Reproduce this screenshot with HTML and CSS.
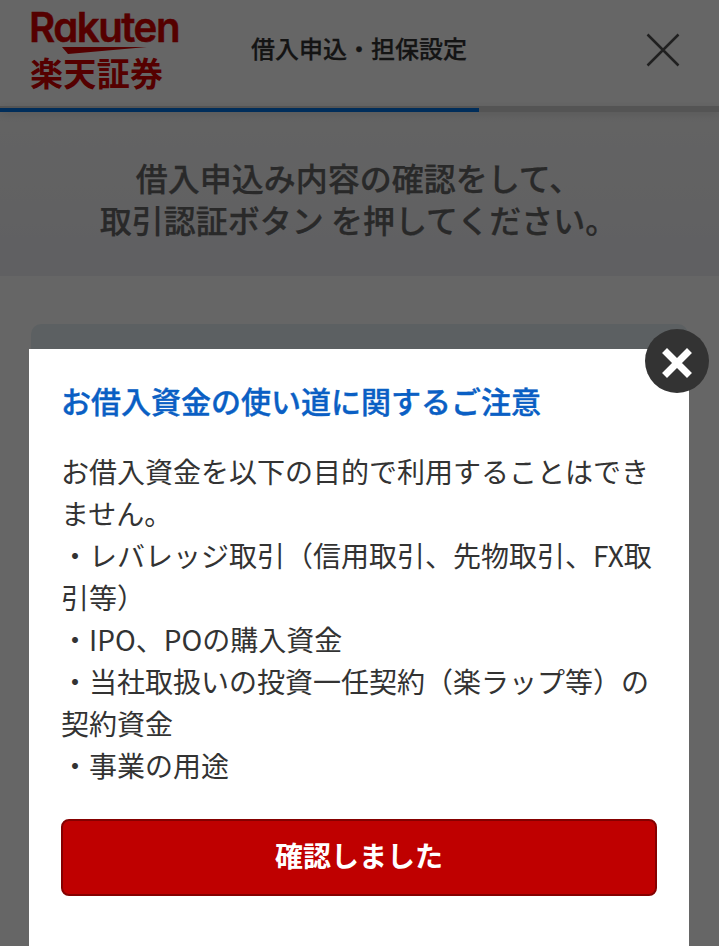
FILE: index.html
```html
<!DOCTYPE html>
<html lang="ja">
<head>
<meta charset="utf-8">
<title>借入申込・担保設定</title>
<link rel="stylesheet" href="styles.css">
</head>
<body>
<header class="header">
  <svg class="logo" width="160" height="92" viewBox="0 0 160 92" role="img" aria-label="Rakuten 楽天証券">
    <text class="logo-en" x="-2" y="42" textLength="150" lengthAdjust="spacingAndGlyphs">Rakuten</text>
    <path d="M31 47H116L37 54Z"/>
    <text class="logo-ja" x="-1" y="86" textLength="133">楽天証券</text>
  </svg>
  <h1 class="title">借入申込・担保設定</h1>
  <svg class="header-close" width="36" height="36" viewBox="0 0 36 36"><path d="M2.500 2.500L33.500 33.500M33.500 2.500L2.500 33.500"/></svg>
</header>
<div class="progress"><div class="progress-bar"></div></div>
<section class="lead">
  <p>借入申込み内容の確認をして、<br>取引認証ボタン を押してください。</p>
</section>
<main class="content"><div class="panel"></div></main>
<div class="overlay">
  <div class="modal">
    <button class="modal-close" aria-label="閉じる">
      <svg width="30" height="30" viewBox="0 0 30 30"><path d="M5 5L25 25M25 5L5 25"/></svg>
    </button>
    <h2>お借入資金の使い道に関するご注意</h2>
    <p class="notice">お借入資金を以下の目的で利用することはできません。<br>・レバレッジ取引（信用取引、先物取引、FX取引等）<br>・IPO、POの購入資金<br>・当社取扱いの投資一任契約（楽ラップ等）の契約資金<br>・事業の用途</p>
    <button class="confirm">確認しました</button>
  </div>
</div>
</body>
</html>
```
FILE: styles.css
```css
* { box-sizing: border-box; }
html, body { height: 100%; }
body {
  margin: 0;
  overflow: hidden;
  background: #fff;
  color: #333;
  font-family: "Noto Sans CJK JP", sans-serif;
}
h1, h2, p { margin: 0; }
.header {
  display: grid;
  grid-template-columns: 220px 1fr 220px;
  height: 106px;
  padding: 0 0 0 31px;
  margin-right: 31px;
}
.logo { display: block; overflow: visible; fill: #d40000; }
.logo-en {
  font: 600 41px Inter, sans-serif;
  font-feature-settings: "cv11";
  letter-spacing: -1.5px;
  stroke: #d40000;
  stroke-width: .5;
}
.logo-ja {
  font: 700 33px "Noto Sans CJK JP", sans-serif;
}
.title {
  padding-top: 30px;
  font-size: 24px;
  line-height: 36px;
  font-weight: 500;
  -webkit-text-stroke: .25px currentColor;
  white-space: nowrap;
}
.header-close { justify-self: end; margin-top: 32px; margin-right: 7px; }
.header-close path { stroke: #505050; stroke-width: 2.5; fill: none; }
.progress {
  height: 6px;
  padding-top: 2px;
  background: #d2d2d2;
  box-shadow: 0 2px 8px rgba(0, 0, 0, .12);
  position: relative;
}
.progress-bar { width: 479px; height: 4px; background: #0070e0; }
.lead {
  height: 164px;
  padding: 44px 2px 0 0;
  background: linear-gradient(#f8f8f8, #efeff4);
  color: #666;
  font-size: 32px;
  line-height: 42px;
  font-weight: 500;
  -webkit-text-stroke: .25px currentColor;
  text-align: center;
}
.content { padding: 48px 31px 0; }
.panel { height: 622px; border-radius: 10px 10px 0 0; background: #e7f1f5; }
.overlay {
  position: fixed;
  inset: 0;
  padding: 349px 30px 0 29px;
  background: rgba(0, 0, 0, .6);
}
.modal {
  position: relative;
  height: 597px;
  padding: 30px 32px 0;
  background: #fff;
}
.modal h2 {
  color: #0a5fc4;
  font-size: 30px;
  line-height: 42px;
  font-weight: 500;
  -webkit-text-stroke: .4px currentColor;
  white-space: nowrap;
}
.notice {
  margin: 29px 0 0;
  font-size: 28px;
  line-height: 42px;
}
.confirm {
  display: block;
  width: 596px;
  height: 77px;
  margin-top: 33px;
  padding: 0 0 6px;
  border: 2px solid #850000;
  border-radius: 8px;
  background: #bf0000;
  color: #fff;
  font: 700 28px "Noto Sans CJK JP", sans-serif;
}
.modal-close {
  position: absolute;
  top: -20px;
  right: -20px;
  display: grid;
  place-items: center;
  width: 64px;
  height: 64px;
  padding: 4px 0 0;
  border: 0;
  border-radius: 50%;
  background: #333;
}
.modal-close path { stroke: #fff; stroke-width: 7; stroke-linecap: square; }
```
